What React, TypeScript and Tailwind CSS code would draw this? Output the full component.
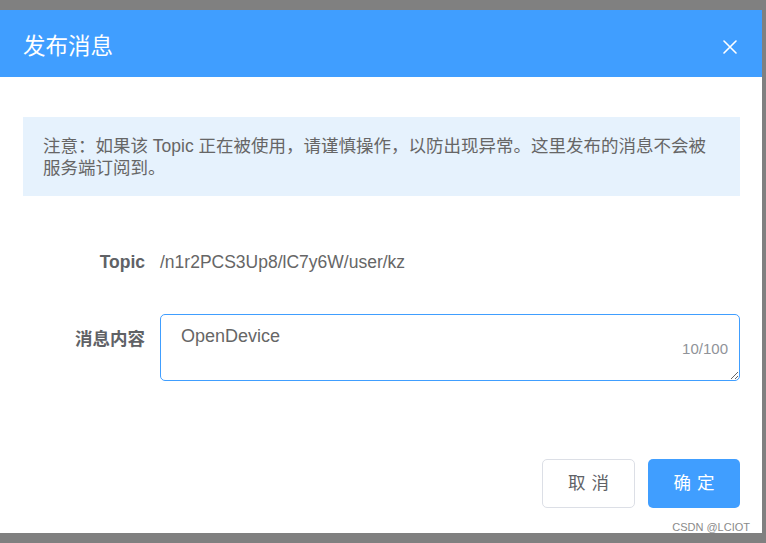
import React from 'react';

const font = { fontFamily: '"Liberation Sans", "Noto Sans CJK SC", sans-serif' };

export default function App() {
  return (
    <div className="w-[766px] h-[543px] bg-[#808080] pt-[10px] overflow-hidden" style={font}>
      <div className="relative w-[762px] h-[523px] bg-white flex flex-col">
        {/* header */}
        <div className="h-[67px] bg-[#409EFF] flex items-center justify-between pl-[23px] pr-[25px] shrink-0">
          <span className="text-[22.5px] text-white leading-none pt-[8px]">发布消息</span>
          <svg width="14" height="14" viewBox="0 0 14 14" className="mt-[6px]">
            <path d="M1 1L13 13M13 1L1 13" stroke="#ffffff" strokeWidth="1.6" strokeLinecap="round" />
          </svg>
        </div>

        <div className="pl-[23px] pr-[22px] pt-[40px]">
          {/* notice */}
          <div className="h-[79px] bg-[#e6f2fd] px-[20px] pt-[18px] text-[17.5px] leading-[22px] text-[#666666]">
            注意：如果该 Topic 正在被使用，请谨慎操作，以防出现异常。这里发布的消息不会被服务端订阅到。
          </div>

          {/* topic row */}
          <div className="flex mt-[41px] h-[50px] items-center">
            <div className="w-[137px] pr-[15px] text-right font-bold text-[17.5px] text-[#606266]">Topic</div>
            <div className="text-[17.5px] text-[#666666]">/n1r2PCS3Up8/lC7y6W/user/kz</div>
          </div>

          {/* message row */}
          <div className="flex mt-[27px]">
            <div className="w-[137px] pr-[15px] text-right font-bold text-[17.5px] leading-[50px] text-[#606266]">消息内容</div>
            <div className="relative flex-1">
              <textarea
                readOnly
                defaultValue="OpenDevice"
                className="block w-full h-[67px] border border-[#409EFF] rounded-[5px] pl-[20px] pr-[60px] pt-[8px] text-[18px] leading-[26px] text-[#666666] outline-none resize-y"
                style={font}
              />
              <span className="absolute right-[12px] top-[27px] text-[15px] leading-[16px] text-[#909399]">10/100</span>
            </div>
          </div>

          {/* footer */}
          <div className="flex justify-end gap-[13px] mt-[78px]">
            <button className="w-[93px] h-[49px] border border-[#dcdfe6] rounded-[5px] bg-white text-[17.5px] text-[#606266] tracking-[6px] pl-[6px]">
              取消
            </button>
            <button className="w-[92px] h-[49px] rounded-[5px] bg-[#409EFF] text-[17.5px] text-white tracking-[6px] pl-[6px]">
              确定
            </button>
          </div>
        </div>

        <span className="absolute right-[12px] bottom-[-1px] text-[11px] text-[#8a8a8a] leading-[14px]">CSDN @LCIOT</span>
      </div>
    </div>
  );
}
